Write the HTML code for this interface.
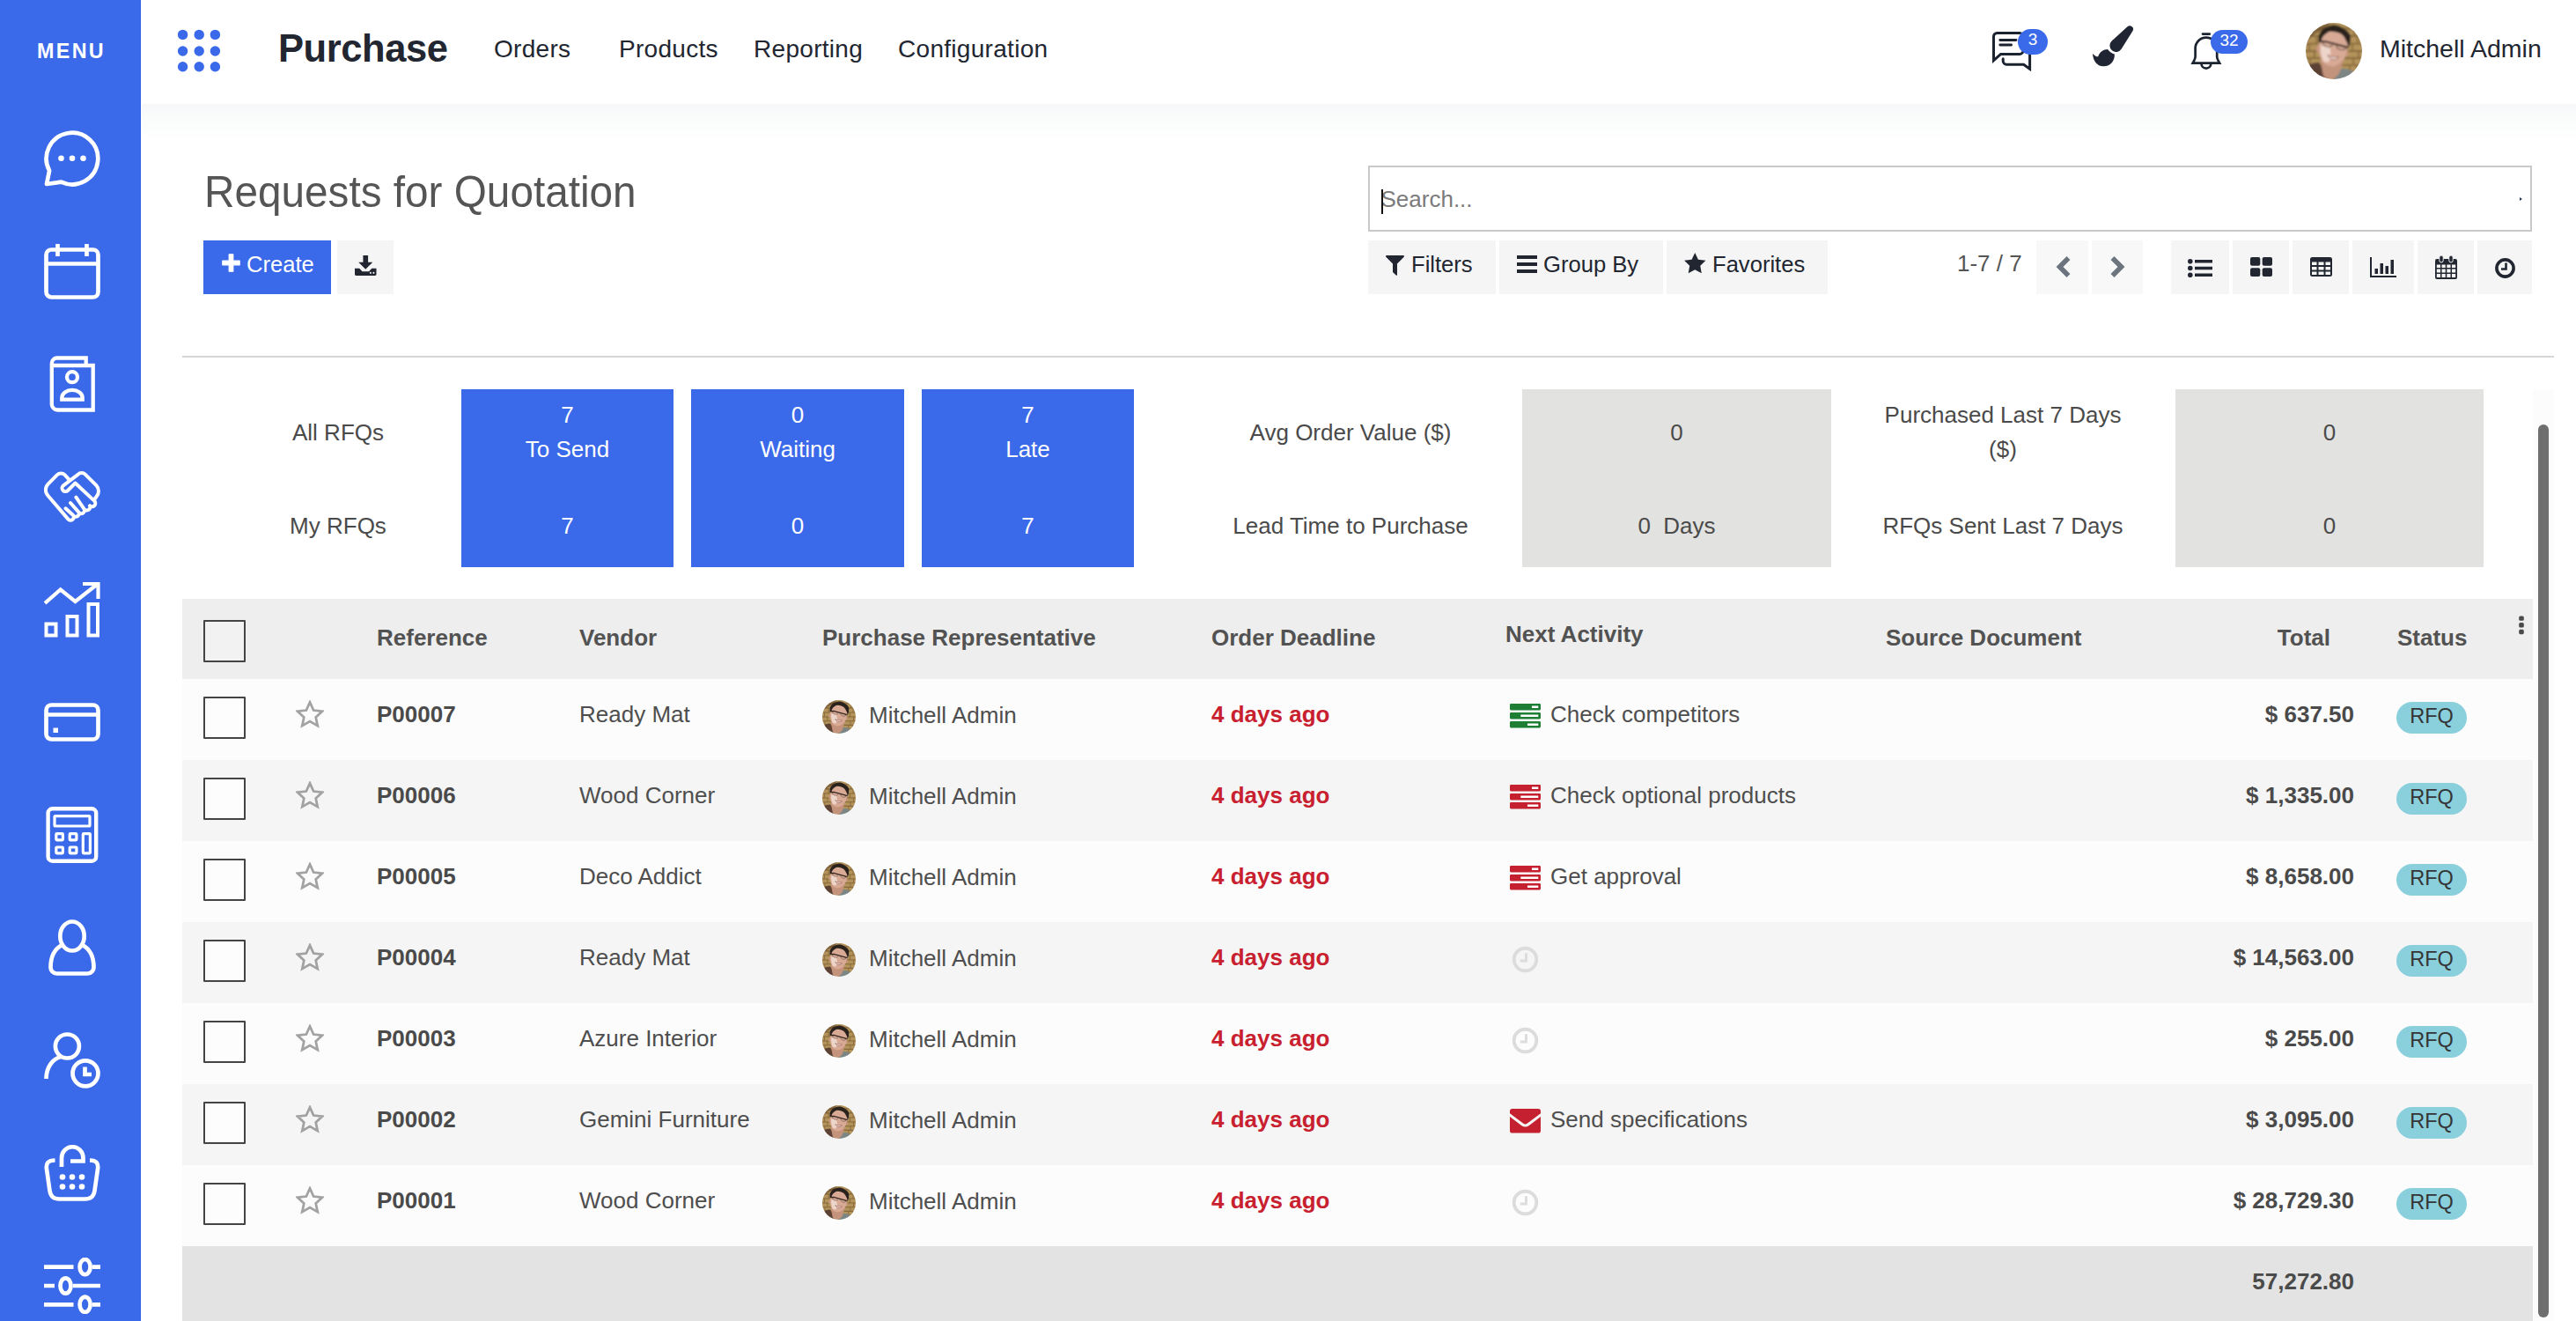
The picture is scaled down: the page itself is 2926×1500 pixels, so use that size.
<!DOCTYPE html>
<html lang="en"><head><meta charset="utf-8"><title>Odoo - Requests for Quotation</title>
<style>
*{box-sizing:border-box;margin:0;padding:0}
html,body{width:2926px;height:1500px;overflow:hidden;background:#fff}
body{font-family:"Liberation Sans",sans-serif;font-size:26px;color:#4e4e4e;position:relative}
#side{position:absolute;left:0;top:0;width:160px;height:1500px;background:#3a69e9;border-right:1px solid #3463e0}
#side .menu{position:absolute;left:0;width:160px;top:44.5px;text-align:center;color:#fff;font-weight:bold;font-size:23.3px;letter-spacing:2.3px;padding-left:2px}
#side svg{position:absolute;left:50px;fill:none;stroke:#fff;stroke-width:4.7;stroke-linecap:round;stroke-linejoin:round}
#top{position:absolute;left:160px;top:0;width:2766px;height:118px;background:#fff;color:#212631}
#top .brand{position:absolute;left:156px;top:29.5px;font-size:43.5px;font-weight:bold;letter-spacing:-0.4px;line-height:50px}
#top .nav{position:absolute;top:38.6px;font-size:28px;line-height:34px;letter-spacing:.3px}
#top .user{position:absolute;left:2543px;top:38px;font-size:28.5px;line-height:34px}
#top .badge{position:absolute;background:#3a69e9;color:#fff;font-size:19px;line-height:28px;text-align:center;border-radius:15px}
#main{position:absolute;left:161px;top:118px;width:2765px;height:1382px;background:linear-gradient(#f7f8f9,#fbfcfc 22px,#fff 42px)}
h1{position:absolute;left:71px;top:70.2px;transform:scaleX(.962);transform-origin:0 0;white-space:nowrap;font-size:49.6px;font-weight:normal;color:#555;line-height:60px}
.btn{position:absolute;top:155px;height:61px;background:#f5f5f5;color:#212631;font-size:25.6px;line-height:54px;white-space:nowrap}
.btn svg{position:absolute;fill:#212631}
.btn span{position:absolute;top:0}
#create{left:70px;width:145px;background:#3a69e9;color:#fff}
#search{position:absolute;left:1393px;top:70px;width:1322px;height:75px;border:2px solid #c9c9c9;background:#fff}
#search span{position:absolute;left:12.5px;top:20px;font-size:26px;color:#7b7b7b;line-height:32px}
#search i{position:absolute;left:12.5px;top:25px;width:2.4px;height:28px;background:#111}
#search b{position:absolute;right:9px;top:33.5px;border-left:3.2px solid #2c3e66;border-top:2.8px solid transparent;border-bottom:2.8px solid transparent}
#pager{position:absolute;left:2062px;top:164px;font-size:26px;line-height:34px;color:#555}
#hr{position:absolute;left:46px;top:286px;width:2694px;height:2px;background:#d6d6d6}
.lab{position:absolute;text-align:center;line-height:39px;font-size:26px;color:#4a4a4a;white-space:nowrap}
.card{position:absolute;top:324px;height:202px;background:#3a69e9;color:#fff;text-align:center;font-size:26px;line-height:39px}
.card.g{background:#e2e2e0;color:#4a4a4a}
.card span{position:absolute;left:0;width:100%}
#thead{position:absolute;left:46px;top:562px;width:2670px;height:91px;background:#eee}
#thead .h{position:absolute;top:28px;font-weight:bold;color:#525252;font-size:26px;line-height:32px;white-space:nowrap}
.kebab{position:absolute;left:2652.5px;top:19px;fill:#4a4a4a}
.cb{position:absolute;left:24px;top:20px;width:48px;height:48px;border:2px solid #444;background:#fdfdfd;border-radius:1px}
#thead .cb{top:24px;background:#f2f2f2}
.row{position:absolute;left:46px;width:2670px;height:92px}
.row{top:0}
.odd{background:#fcfcfc}.even{background:#f5f5f5}
.row .c,#tfoot .c{position:absolute;top:23.5px;line-height:32px;white-space:nowrap}
.ref{left:221px;font-weight:bold;color:#4a4a4a}
.ven{left:451px}
.av{position:absolute;left:727px;top:24px}
.rep{left:780px;top:25px!important}
.dl{left:1169px;font-weight:bold;color:#c8202f}
.ai{position:absolute;left:1508px;top:28px}
.ai.ck{left:1509.5px;top:27px}
.act{left:1554px}
.tot{right:203px;font-weight:bold;color:#4a4a4a}
.star{position:absolute;left:129px;top:24px}
.pill{position:absolute;left:2515px;top:26px;width:80px;height:36px;border-radius:18px;background:#8acfdc;color:#353535;font-size:23.5px;line-height:32px;text-align:center}
#tfoot{position:absolute;left:46px;top:1297px;width:2670px;height:90px;background:#e3e3e3}
#sbt{position:absolute;left:2716px;top:324px;width:24px;height:1058px;background:#fcfcfc}
#sb{position:absolute;left:2722px;top:364px;width:12px;height:1014px;border-radius:6px;background:#6e6e6e}

</style></head>
<body>
<svg width="0" height="0" style="position:absolute">
<defs>
<clipPath id="avc"><circle cx="32" cy="32" r="32"/></clipPath>
<linearGradient id="avbg" x1="0" y1="0" x2="1" y2="0"><stop offset="0" stop-color="#a8742f"/><stop offset=".55" stop-color="#8b5a24"/><stop offset="1" stop-color="#6b421b"/></linearGradient>
<filter id="avblur" x="-5%" y="-5%" width="110%" height="110%"><feGaussianBlur stdDeviation="0.9"/></filter>
<g id="avatar" clip-path="url(#avc)"><g filter="url(#avblur)">
<rect x="-4" y="-4" width="72" height="72" fill="#b3935a"/>
<path d="M-4 6.5H68M-4 15H68M-4 23.6H68M-4 32H68M-4 40H68M-4 47.8H68M-4 55.7H68" stroke="#86683c" stroke-width="1.8"/>
<path d="M8 6.5V15M4 23.6V32M10 32V40M5 40V47.8M55 6.5V15M59 15V23.6M53 23.6V32M60 32V40M54 40V47.8M58 47.8V55.7M12 15V23.6M50 47.8V55.7" stroke="#86683c" stroke-width="1.5"/>
<path d="M-4 -4H34L20 8 8 14-4 26Z" fill="#5d4226" opacity=".55"/>
<path d="M-2 52C3 47 9 45 15 44.8L26 62V68H-4Z" fill="#5c4236"/>
<path d="M38.2 52.7C44 51 50 52.5 56 57L50 68H30Z" fill="#7b8685"/>
<path d="M16.4 42 20 60C26 67 35 64 39 55L44 40Z" fill="#c4937c"/>
<path d="M15 22C14 30 15 38 19 44C23 49 29 50 33 49C38 47.5 43 42 45.4 37.5C47 33 48 28 48.2 24C47 16 40 10 31 9.5C22 9.5 16 14 15 22Z" fill="#d8aa96"/>
<ellipse cx="13.8" cy="30" rx="1.8" ry="3.4" fill="#c99680"/>
<ellipse cx="47" cy="34.5" rx="1.6" ry="3" fill="#c99680"/>
<path d="M17 26C16.5 32 17.5 38 20 43C23 46 27 45 28 40C29 34 28 29 26 26Z" fill="#f1ddd4" opacity=".85"/>
<path d="M14.5 22.4C14 16 15 12 17 10.3C19 7 22 5 24.8 4.2C28 2.8 31 2.2 33.3 2.4C37 2.6 40 4 42.4 6C46 8 49 10.5 50.3 13.3C51.2 15 51.2 16.5 50.9 17.6C50.8 22 49.8 26 48.5 28.5C48 25 47 22 45.4 19.4C44 16 42 14 39.4 12.1C35 10.2 31 9.6 27.3 9.7C24 11 22 13 20 15.1C18.5 17 18 19 17.6 21.2Z" fill="#2a211d"/>
<path d="M15 21.2 22 21 47.8 27.9" stroke="#33261f" stroke-width="2.2" fill="none"/>
<path d="M19.5 22C19.5 27.5 28.5 29 30.5 24.5M35 25.5C35 31 44 32.5 46.5 28" stroke="#6a5044" stroke-width="1.1" fill="none"/>
<path d="M24.8 36.6C29 38.6 33.5 39.3 37.5 38.4C35.5 42.5 28.5 43 24.8 36.6Z" fill="#f4ebe6" stroke="#8a4a40" stroke-width=".9"/>
</g></g>
<path id="i-star-o" d="M17 2.5 21.4 12.2 32 13.4 24.1 20.6 26.3 31 17 25.7 7.7 31 9.9 20.6 2 13.4 12.6 12.2Z" fill="none" stroke="#a2a2a2" stroke-width="2.9" stroke-linejoin="miter"/>
<g id="i-tasks"><rect width="35" height="7.4" rx="1.3"/><rect y="10" width="35" height="7.4" rx="1.3"/><rect y="20" width="35" height="7.4" rx="1.3"/><path d="M25 2.5H32.3V5H25ZM12.3 12.6H32.3V15.1H12.3ZM20 22.5H32.3V24.9H20Z" fill="#fff"/></g>
<g id="i-mail"><path d="M0 3a3 3 0 0 1 3-3H33a3 3 0 0 1 3 3V5.5L20.5 17.5a4.2 4.2 0 0 1-5 0L0 5.5ZM0 9.5 13.5 20a7.5 7.5 0 0 0 9 0L36 9.5V26a3 3 0 0 1-3 3H3a3 3 0 0 1-3-3Z"/></g>
<g id="i-clock-lite" fill="none" stroke="#dcdcdc"><circle cx="16" cy="16" r="13.2" stroke-width="4"/><path d="M17 8.5V17.5H10" stroke-width="3"/></g>
</defs>
</svg>

<div id="side">
<div class="menu">MENU</div>
<svg style="top:148px" width="64" height="64" viewBox="0 0 64 64"><path d="M19.6 58.6A29.3 29.3 0 1 0 6.1 45.8L3 61Z"/><g fill="#fff" stroke="none"><circle cx="19.5" cy="31.7" r="3.3"/><circle cx="32" cy="31.7" r="3.3"/><circle cx="44.5" cy="31.7" r="3.3"/></g></svg>
<svg style="top:276px" width="64" height="64" viewBox="0 0 64 64"><rect x="2.5" y="7.5" width="59" height="54" rx="6"/><path d="M2.5 23.5H61.5M15.5 1V15M48.5 1V15" stroke-linecap="butt"/></svg>
<svg style="stroke-width:4.3;top:404px" width="64" height="64" viewBox="0 0 64 64"><path d="M8.8 10.5V55a6.5 6.5 0 0 0 6.5 6.5H55.7V11H9.5M8.8 11V8.5a6 6 0 0 1 6-6H47.7V10" stroke-linecap="butt" stroke-linejoin="miter"/><circle cx="32" cy="24.2" r="6"/><path d="M20.3 49.6V47.5a11.7 8.6 0 0 1 23.4 0V49.6Z" stroke-linejoin="miter"/></svg>
<svg style="stroke-width:4;top:532px" width="64" height="64" viewBox="0 0 64 64"><path d="M28.5 12.6 23.5 7.2a6 6 0 0 0-8.5 0L4.6 17.6a9.5 9.5 0 0 0 0 13.4L27.5 57.6a3.6 3.6 0 0 0 5.6-4.5M24.5 45.3 33 53a3.6 3.6 0 0 0 6.2-3.7M30 39 39.2 49.3a3.6 3.6 0 0 0 6.3-3.5M36.4 32.6 45.5 45.8a3.7 3.7 0 0 0 6.5-3.5M52 42.3a3.8 3.8 0 0 0 5.5-5.2L35.5 16.5 27 25a3.8 3.8 0 0 1-5.4-5.4L38.5 6.8a6 6 0 0 1 8.5 0L59.4 19.2a9.5 9.5 0 0 1 .3 12.6L56.5 36"/></svg>
<svg style="top:660px;stroke-linecap:butt;stroke-linejoin:miter" width="64" height="64" viewBox="0 0 64 64"><path d="M1 25 18.7 9.5 35.5 23 61 3M44 3H61.5V20" stroke-width="4.2"/><path d="M2.5 48.5H13.5V61.5H2.5ZM26.5 40H37.5V61.5H26.5ZM50.5 26H61V61.5H50.5Z" stroke-width="4"/></svg>
<svg style="top:788px" width="64" height="64" viewBox="0 0 64 64"><rect x="2.5" y="12.5" width="59" height="39" rx="6"/><path d="M2.5 23.5H61.5" stroke-linecap="butt"/><rect x="10.5" y="38.5" width="5.5" height="5.5" fill="#fff" stroke="none"/></svg>
<svg style="stroke-width:3.2;top:916px" width="64" height="64" viewBox="0 0 64 64"><rect x="4.6" y="2.3" width="54.6" height="59.4" rx="5" stroke-width="4.4"/><rect x="12" y="10.6" width="40" height="11.4" rx="1"/><rect x="13.8" y="30.6" width="7.6" height="7.3" rx=".8"/><rect x="29.2" y="30.6" width="7.7" height="7.3" rx=".8"/><rect x="13.8" y="46" width="7.6" height="6.9" rx=".8"/><rect x="29.2" y="46" width="7.7" height="6.9" rx=".8"/><rect x="44.3" y="30.6" width="8.1" height="22.3" rx=".8"/></svg>
<svg style="top:1044px" width="64" height="64" viewBox="0 0 64 64"><ellipse cx="32" cy="19" rx="13.7" ry="16.5"/><path d="M20.5 29C11 34 7.5 44 7.5 54.5a7 7 0 0 0 7 7H49.5a7 7 0 0 0 7-7C56.5 44 53 34 43.5 29"/></svg>
<svg style="top:1172px" width="64" height="64" viewBox="0 0 64 64"><circle cx="26.4" cy="16" r="13.5"/><path d="M2.5 53C2.5 40 9.5 30.5 19 28" stroke-linecap="butt"/><circle cx="47" cy="46.8" r="14.5"/><path d="M46.5 39.5V48H54" stroke-linecap="butt" stroke-linejoin="miter"/></svg>
<svg style="top:1300px" width="64" height="64" viewBox="0 0 64 64"><path d="M20 25V15a12 12.5 0 0 1 24.5 0V18.5H30" stroke-linejoin="miter" stroke-linecap="butt"/><path d="M12.5 17.5C4.5 17.5 2 21 3 27.5L6.5 52C7.5 59 11 61.5 17.5 61.5H46.5C53 61.5 56.5 59 57.5 52L61 27.5C62 21 59.5 17.5 52 17.5" stroke-linecap="butt"/><g fill="#fff" stroke="none"><circle cx="21" cy="36.5" r="3.3"/><circle cx="32" cy="36.5" r="3.3"/><circle cx="43" cy="36.5" r="3.3"/><circle cx="21" cy="47.5" r="3.3"/><circle cx="32" cy="47.5" r="3.3"/><circle cx="43" cy="47.5" r="3.3"/></g></svg>
<svg style="top:1428px;stroke-linecap:butt" width="64" height="64" viewBox="0 0 64 64"><path d="M0 10.6H33.5M55 10.6H64M0 32H12M33 32H64M0 53.3H33.5M55 53.3H64"/><ellipse cx="46.6" cy="10.6" rx="6" ry="8.6"/><ellipse cx="24.5" cy="32" rx="6" ry="8.6"/><ellipse cx="46.6" cy="53.3" rx="6" ry="8.6"/></svg>
</div>

<div id="top">
<svg style="position:absolute;left:40px;top:32px" width="52" height="52" viewBox="0 0 52 52" fill="#3a69e9"><circle cx="7.6" cy="7.4" r="5.7"/><circle cx="26.2" cy="7.4" r="5.7"/><circle cx="44.4" cy="7.4" r="5.7"/><circle cx="7.6" cy="26" r="5.7"/><circle cx="26.2" cy="26" r="5.7"/><circle cx="44.4" cy="26" r="5.7"/><circle cx="7.6" cy="43.8" r="5.7"/><circle cx="26.2" cy="43.8" r="5.7"/><circle cx="44.4" cy="43.8" r="5.7"/></svg>
<div class="brand">Purchase</div>
<div class="nav" style="left:401px">Orders</div>
<div class="nav" style="left:543px">Products</div>
<div class="nav" style="left:696px">Reporting</div>
<div class="nav" style="left:860px">Configuration</div>
<svg style="position:absolute;left:2102px;top:34px" width="48" height="48" viewBox="0 0 48 48" fill="none" stroke="#1b2330" stroke-width="3"><path d="M10.7 27.4 2.5 34.6V7.4a4 4 0 0 1 4-4H32a4 4 0 0 1 4 4V23.4a4 4 0 0 1-4 4Z"/><path d="M9.8 11.5H28M9.8 17H22.6" stroke-linecap="round" stroke-width="2.8"/><path d="M13.2 32.8V35.2a4 4 0 0 0 4 4H36.6L43.6 44.3V27" stroke-linecap="round"/></svg>
<span class="badge" style="left:2132px;top:33px;width:34px;height:29px;line-height:24.5px">3</span>
<svg style="position:absolute;left:2216px;top:28px" width="48" height="48" viewBox="0 0 48 48" fill="#1f2532"><path d="M40.5 2.3 22.7 18.5A7.2 7.2 0 1 0 33.7 27.6L46.4 7.3A3.9 3.9 0 0 0 40.5 2.3Z"/><path d="M1 32.9C3 35 5.5 36.5 7.2 36.3C9 31 13 28.3 18.1 28.1C20 31 23 33 25.8 33.4C26.5 40 21.5 47.5 13 47.3C6 47 1.5 41 1 32.9Z"/></svg>
<svg style="position:absolute;left:2328px;top:36px" width="36" height="44" viewBox="0 0 36 44" fill="none" stroke="#1b2330" stroke-width="2.7"><path d="M14 2.6H21.8" stroke-linecap="round"/><path d="M5.6 19a12.3 12.3 0 0 1 24.6 0V28.5c0 2.5 1.4 4.4 2.9 7.1H2.7c1.5-2.7 2.9-4.6 2.9-7.1Z" stroke-linejoin="miter"/><path d="M12.5 36.6a5.4 5 0 0 0 10.8 0"/></svg>
<span class="badge" style="left:2351px;top:34px;width:42px;height:27px;line-height:24px">32</span>
<svg style="position:absolute;left:2459px;top:26px" width="64" height="64" viewBox="0 0 64 64"><use href="#avatar"/></svg>
<div class="user">Mitchell Admin</div>
</div>

<div id="main">
<h1>Requests for Quotation</h1>
<div class="btn" id="create"><svg style="left:21px;top:15px;fill:#fff;stroke:#fff;stroke-width:1.2;stroke-linejoin:round" width="21" height="21" viewBox="0 0 21 21"><path d="M8.2 .8H12.8V8.2H20.2V12.8H12.8V20.2H8.2V12.8H.8V8.2H8.2Z"/></svg><span style="left:49px">Create</span></div>
<div class="btn" style="left:222px;width:64px"><svg style="left:20px;top:17px" width="24.5" height="23" viewBox="0 0 26 24" preserveAspectRatio="none"><path d="M10 0H16V8H21.5L13 16.5 4.5 8H10Z"/><path d="M0 15.5H5.5L9 19H17L20.5 15.5H26V22.5A1.5 1.5 0 0 1 24.5 24H1.5A1.5 1.5 0 0 1 0 22.5Z"/><circle cx="19" cy="20.7" r="1.1" fill="#f5f5f5"/><circle cx="22.7" cy="20.7" r="1.1" fill="#f5f5f5"/></svg></div>
<div id="search"><span>Search...</span><i></i><b></b></div>
<div class="btn" style="left:1393px;width:145px"><svg style="left:20px;top:17px" width="21" height="23" viewBox="0 0 21 23"><path d="M1 0H20A1 1 0 0 1 20.7 1.7L13 9.5V22A.8 .8 0 0 1 11.7 22.6L8 19V9.5L.3 1.7A1 1 0 0 1 1 0Z"/></svg><span style="left:49px">Filters</span></div>
<div class="btn" style="left:1542px;width:186px"><svg style="left:20px;top:17px" width="23" height="20" viewBox="0 0 23 20"><path d="M0 0H23V4H0ZM0 8H23V12H0ZM0 16H23V20H0Z"/></svg><span style="left:50px">Group By</span></div>
<div class="btn" style="left:1732px;width:183px"><svg style="left:20px;top:14px" width="24.5" height="23.5" viewBox="0 0 26 25"><path d="M13 0 16.9 8.2 26 9.4 19.4 15.7 21 24.8 13 20.4 5 24.8 6.6 15.7 0 9.4 9.1 8.2Z"/></svg><span style="left:52px">Favorites</span></div>
<div id="pager">1-7 / 7</div>
<div class="btn" style="left:2152px;width:59px;background:#f8f8f8"><svg style="left:22px;top:18px;fill:none;stroke:#6c757d;stroke-width:5.6" width="18" height="24" viewBox="0 0 18 24"><path d="M14.5 2 4.5 12 14.5 22"/></svg></div>
<div class="btn" style="left:2215px;width:58px;background:#f8f8f8"><svg style="left:20px;top:18px;fill:none;stroke:#6c757d;stroke-width:5.6" width="18" height="24" viewBox="0 0 18 24"><path d="M3.5 2 13.5 12 3.5 22"/></svg></div>
<div class="btn" style="left:2305px;width:66px"><svg style="left:19px;top:21px" width="28" height="21" viewBox="0 0 28 21"><circle cx="2.8" cy="2.8" r="2.8"/><circle cx="2.8" cy="10.5" r="2.8"/><circle cx="2.8" cy="18.2" r="2.8"/><path d="M8 1H28V4.6H8ZM8 8.7H28V12.3H8ZM8 16.4H28V20H8Z"/></svg></div>
<div class="btn" style="left:2375px;width:64px"><svg style="left:20px;top:19px" width="25" height="22" viewBox="0 0 25 22"><rect width="11.3" height="9.8" rx="2"/><rect x="13.7" width="11.3" height="9.8" rx="2"/><rect y="12.2" width="11.3" height="9.8" rx="2"/><rect x="13.7" y="12.2" width="11.3" height="9.8" rx="2"/></svg></div>
<div class="btn" style="left:2443px;width:64px"><svg style="left:20px;top:19px" width="25" height="22" viewBox="0 0 25 22"><path fill-rule="evenodd" d="M2.5 0H22.5A2.5 2.5 0 0 1 25 2.5V19.5A2.5 2.5 0 0 1 22.5 22H2.5A2.5 2.5 0 0 1 0 19.5V2.5A2.5 2.5 0 0 1 2.5 0ZM2 5.5V9H7.5V5.5ZM9.5 5.5V9H15.5V5.5ZM17.5 5.5V9H23V5.5ZM2 11V14.5H7.5V11ZM9.5 11V14.5H15.5V11ZM17.5 11V14.5H23V11ZM2 16.5V20H7.5V16.5ZM9.5 16.5V20H15.5V16.5ZM17.5 16.5V20H23V16.5Z"/></svg></div>
<div class="btn" style="left:2511px;width:70px"><svg style="left:20px;top:19px" width="30" height="23" viewBox="0 0 30 23"><path d="M0 0H2V21H30V23H0ZM5.5 13H9V19H5.5ZM11.5 7H15V19H11.5ZM17.5 10H21V19H17.5ZM23.5 3H27V19H23.5Z"/></svg></div>
<div class="btn" style="left:2585px;width:64px"><svg style="left:20px;top:17px" width="25" height="27" viewBox="0 0 25 27"><path fill-rule="evenodd" d="M2 4H23A2 2 0 0 1 25 6V25A2 2 0 0 1 23 27H2A2 2 0 0 1 0 25V6A2 2 0 0 1 2 4ZM1.8 10.5V14H6V10.5ZM7.5 10.5V14H11.7V10.5ZM13.3 10.5V14H17.5V10.5ZM19 10.5V14H23.2V10.5ZM1.8 15.5V19.5H6V15.5ZM7.5 15.5V19.5H11.7V15.5ZM13.3 15.5V19.5H17.5V15.5ZM19 15.5V19.5H23.2V15.5ZM1.8 21V25H6V21ZM7.5 21V25H11.7V21ZM13.3 21V25H17.5V21ZM19 21V25H23.2V21Z"/><rect x="4.8" y="0" width="4.4" height="8" rx="2.2" stroke="#f5f5f5" stroke-width="1"/><rect x="15.8" y="0" width="4.4" height="8" rx="2.2" stroke="#f5f5f5" stroke-width="1"/></svg></div>
<div class="btn" style="left:2653px;width:62px"><svg style="left:20px;top:20px;fill:none;stroke:#212631" width="23" height="23" viewBox="0 0 23 23"><circle cx="11.5" cy="11.5" r="9.6" stroke-width="3.6"/><path d="M12.5 5.5V12.5H7" stroke-width="2.6"/></svg></div>
<div id="hr"></div>

<div class="lab" style="left:123px;width:200px;top:354px">All RFQs</div>
<div class="lab" style="left:123px;width:200px;top:460px">My RFQs</div>
<div class="card" style="left:363px;width:241px"><span style="top:10px">7</span><span style="top:49px">To Send</span><span style="top:136px">7</span></div>
<div class="card" style="left:624px;width:242px"><span style="top:10px">0</span><span style="top:49px">Waiting</span><span style="top:136px">0</span></div>
<div class="card" style="left:886px;width:241px"><span style="top:10px">7</span><span style="top:49px">Late</span><span style="top:136px">7</span></div>
<div class="lab" style="left:1173px;width:400px;top:354px">Avg Order Value ($)</div>
<div class="lab" style="left:1173px;width:400px;top:460px">Lead Time to Purchase</div>
<div class="card g" style="left:1568px;width:351px"><span style="top:30px">0</span><span style="top:136px">0&nbsp; Days</span></div>
<div class="lab" style="left:1914px;width:400px;top:334px;white-space:normal;padding:0 60px">Purchased Last 7 Days ($)</div>
<div class="lab" style="left:1914px;width:400px;top:460px">RFQs Sent Last 7 Days</div>
<div class="card g" style="left:2310px;width:350px"><span style="top:30px">0</span><span style="top:136px">0</span></div>

<div id="thead">
<span class="cb"></span>
<span class="h" style="left:221px">Reference</span>
<span class="h" style="left:451px">Vendor</span>
<span class="h" style="left:727px">Purchase Representative</span>
<span class="h" style="left:1169px">Order Deadline</span>
<span class="h" style="left:1503px;top:23.5px">Next Activity</span>
<span class="h" style="left:1935px">Source Document</span>
<span class="h" style="right:230px">Total</span>
<span class="h" style="left:2516px">Status</span>
<svg class="kebab" width="8" height="22" viewBox="0 0 8 22"><rect x="1.2" y=".4" width="5.6" height="5.4" rx="1.6"/><rect x="1.2" y="8.1" width="5.6" height="5.4" rx="1.6"/><rect x="1.2" y="15.8" width="5.6" height="5.4" rx="1.6"/></svg>
</div>
<div class="row odd" style="top:653px">
<span class="cb"></span>
<svg class="star" width="32" height="32" viewBox="0 0 34 34"><use href="#i-star-o"/></svg>
<span class="c ref">P00007</span>
<span class="c ven">Ready Mat</span>
<svg class="av" width="38" height="38" viewBox="0 0 64 64"><use href="#avatar"/></svg>
<span class="c rep">Mitchell Admin</span>
<span class="c dl">4 days ago</span>
<svg class="ai" width="35" height="27.5" viewBox="0 0 35 27.5"><use href="#i-tasks" fill="#1e7e34"/></svg><span class="c act">Check competitors</span>
<span class="c tot">$ 637.50</span>
<span class="pill">RFQ</span>
</div><div class="row even" style="top:745px">
<span class="cb"></span>
<svg class="star" width="32" height="32" viewBox="0 0 34 34"><use href="#i-star-o"/></svg>
<span class="c ref">P00006</span>
<span class="c ven">Wood Corner</span>
<svg class="av" width="38" height="38" viewBox="0 0 64 64"><use href="#avatar"/></svg>
<span class="c rep">Mitchell Admin</span>
<span class="c dl">4 days ago</span>
<svg class="ai" width="35" height="27.5" viewBox="0 0 35 27.5"><use href="#i-tasks" fill="#c5202f"/></svg><span class="c act">Check optional products</span>
<span class="c tot">$ 1,335.00</span>
<span class="pill">RFQ</span>
</div><div class="row odd" style="top:837px">
<span class="cb"></span>
<svg class="star" width="32" height="32" viewBox="0 0 34 34"><use href="#i-star-o"/></svg>
<span class="c ref">P00005</span>
<span class="c ven">Deco Addict</span>
<svg class="av" width="38" height="38" viewBox="0 0 64 64"><use href="#avatar"/></svg>
<span class="c rep">Mitchell Admin</span>
<span class="c dl">4 days ago</span>
<svg class="ai" width="35" height="27.5" viewBox="0 0 35 27.5"><use href="#i-tasks" fill="#c5202f"/></svg><span class="c act">Get approval</span>
<span class="c tot">$ 8,658.00</span>
<span class="pill">RFQ</span>
</div><div class="row even" style="top:929px">
<span class="cb"></span>
<svg class="star" width="32" height="32" viewBox="0 0 34 34"><use href="#i-star-o"/></svg>
<span class="c ref">P00004</span>
<span class="c ven">Ready Mat</span>
<svg class="av" width="38" height="38" viewBox="0 0 64 64"><use href="#avatar"/></svg>
<span class="c rep">Mitchell Admin</span>
<span class="c dl">4 days ago</span>
<svg class="ai ck" width="31" height="31" viewBox="0 0 32 32"><use href="#i-clock-lite"/></svg><span class="c act"></span>
<span class="c tot">$ 14,563.00</span>
<span class="pill">RFQ</span>
</div><div class="row odd" style="top:1021px">
<span class="cb"></span>
<svg class="star" width="32" height="32" viewBox="0 0 34 34"><use href="#i-star-o"/></svg>
<span class="c ref">P00003</span>
<span class="c ven">Azure Interior</span>
<svg class="av" width="38" height="38" viewBox="0 0 64 64"><use href="#avatar"/></svg>
<span class="c rep">Mitchell Admin</span>
<span class="c dl">4 days ago</span>
<svg class="ai ck" width="31" height="31" viewBox="0 0 32 32"><use href="#i-clock-lite"/></svg><span class="c act"></span>
<span class="c tot">$ 255.00</span>
<span class="pill">RFQ</span>
</div><div class="row even" style="top:1113px">
<span class="cb"></span>
<svg class="star" width="32" height="32" viewBox="0 0 34 34"><use href="#i-star-o"/></svg>
<span class="c ref">P00002</span>
<span class="c ven">Gemini Furniture</span>
<svg class="av" width="38" height="38" viewBox="0 0 64 64"><use href="#avatar"/></svg>
<span class="c rep">Mitchell Admin</span>
<span class="c dl">4 days ago</span>
<svg class="ai" width="35" height="27.5" viewBox="0 0 36 29" preserveAspectRatio="none"><use href="#i-mail" fill="#c5202f"/></svg><span class="c act">Send specifications</span>
<span class="c tot">$ 3,095.00</span>
<span class="pill">RFQ</span>
</div><div class="row odd" style="top:1205px">
<span class="cb"></span>
<svg class="star" width="32" height="32" viewBox="0 0 34 34"><use href="#i-star-o"/></svg>
<span class="c ref">P00001</span>
<span class="c ven">Wood Corner</span>
<svg class="av" width="38" height="38" viewBox="0 0 64 64"><use href="#avatar"/></svg>
<span class="c rep">Mitchell Admin</span>
<span class="c dl">4 days ago</span>
<svg class="ai ck" width="31" height="31" viewBox="0 0 32 32"><use href="#i-clock-lite"/></svg><span class="c act"></span>
<span class="c tot">$ 28,729.30</span>
<span class="pill">RFQ</span>
</div>
<div id="tfoot"><span class="c tot" style="top:24px">57,272.80</span></div>

<div id="sbt"></div><div id="sb"></div>
</div>
</body></html>
